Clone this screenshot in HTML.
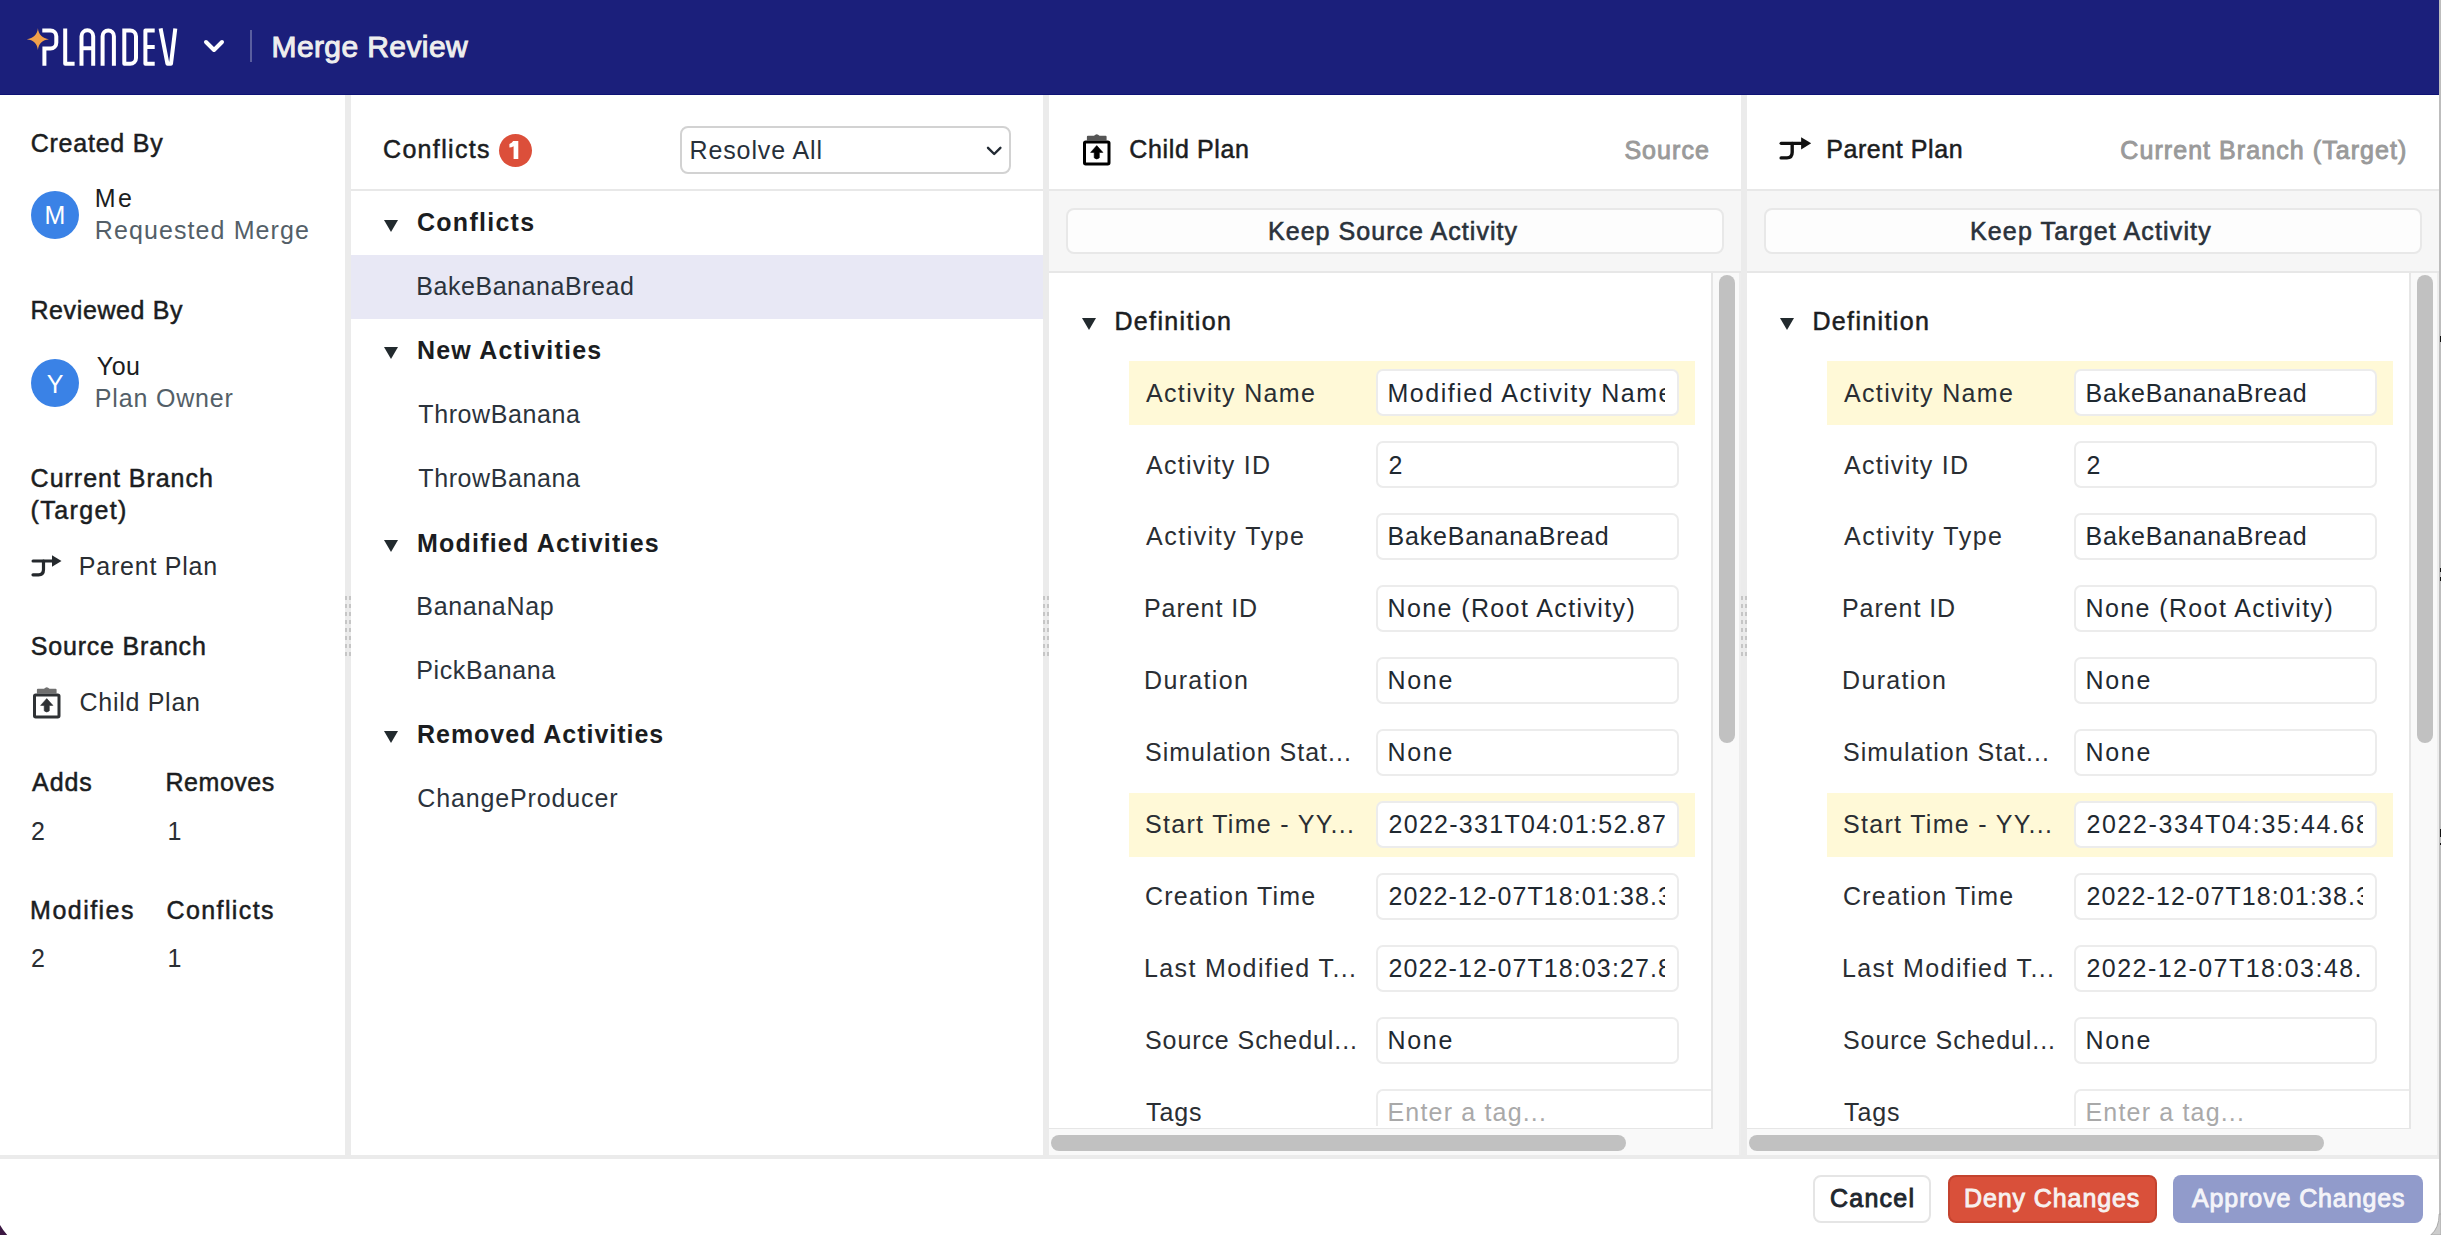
<!DOCTYPE html>
<html><head><meta charset="utf-8"><title>Merge Review</title>
<style>
html,body{margin:0;padding:0;width:2441px;height:1235px;overflow:hidden;background:#fff}
body{position:relative;font-family:"Liberation Sans",sans-serif}
.t{position:absolute;white-space:nowrap;line-height:40px;height:40px;font-family:"Liberation Sans",sans-serif}
</style></head><body>
<div style="position:absolute;left:0px;top:0px;width:2441px;height:95px;background:#1b1f7b;z-index:1"></div>
<div style="position:absolute;left:0px;top:94px;width:2441px;height:1px;background:#0e1275;z-index:2"></div>
<svg style="position:absolute;left:0;top:0;z-index:3" width="260" height="95" viewBox="0 0 260 95">
<g fill="none" stroke="#ffffff" stroke-width="4" stroke-linejoin="round">
<path d="M42.3 30.4 H50.5 A5.8 5.8 0 0 1 56.3 36.2 V42.7 A5.8 5.8 0 0 1 50.5 48.5 H44.4 M44.4 46.5 V65.7"/>
<path d="M65.2 28.4 V63.7 H74.6"/>
<path d="M81.5 65.7 V36.2 A5.85 5.85 0 0 1 93.2 36.2 V65.7 M81.5 48.2 H93.2"/>
<path d="M102.6 65.7 V36.2 A5.65 5.65 0 0 1 113.9 36.2 V65.7"/>
<path d="M124.3 28.4 V63.7 H130.2 A5.8 5.8 0 0 0 136 57.9 V36.2 A5.8 5.8 0 0 0 130.2 30.4 H124.3"/>
<path d="M154.7 30.4 H145.4 V63.7 H154.7 M145.4 47 H154.7"/>
<path d="M160.6 28.4 L167.4 63.7 H171 L175.3 28.4"/>
<path d="M206 42 L214 50 L222 42" stroke-linecap="round" stroke-width="4"/>
</g>
<path d="M37.9 28.3 C38.5 34.6 42.5 38.6 49 39.2 C42.5 39.800000000000004 38.5 43.800000000000004 37.9 50.1 C37.3 43.800000000000004 33.3 39.800000000000004 26.8 39.2 C33.3 38.6 37.3 34.6 37.9 28.3 Z" fill="#f0a04b"/>
<rect x="250" y="30" width="2" height="32" fill="#5a5e9f"/>
</svg>
<div class="t" style="left:271.50px;top:27.00px;font-size:30px;font-weight:400;color:#eeeeee;letter-spacing:0.403px;-webkit-text-stroke:1.0px #eeeeee;z-index:5">Merge Review</div>
<div style="position:absolute;left:0px;top:95px;width:2441px;height:1140px;background:#ffffff;z-index:0"></div>
<div style="position:absolute;left:345px;top:95px;width:6px;height:1060px;background:#ebebeb;z-index:2"></div>
<div style="position:absolute;left:1043px;top:95px;width:6px;height:1060px;background:#ebebeb;z-index:2"></div>
<div style="position:absolute;left:1741px;top:95px;width:6px;height:1060px;background:#ebebeb;z-index:2"></div>
<div style="position:absolute;left:0px;top:1155px;width:2441px;height:4px;background:#ebebeb;z-index:2"></div>
<div style="position:absolute;left:345px;top:596px;width:2.3px;height:4px;background:#c6c6c6;z-index:3"></div>
<div style="position:absolute;left:348.9px;top:596px;width:2.1px;height:4px;background:#c6c6c6;z-index:3"></div>
<div style="position:absolute;left:345px;top:604px;width:2.3px;height:4px;background:#c6c6c6;z-index:3"></div>
<div style="position:absolute;left:348.9px;top:604px;width:2.1px;height:4px;background:#c6c6c6;z-index:3"></div>
<div style="position:absolute;left:345px;top:612px;width:2.3px;height:4px;background:#c6c6c6;z-index:3"></div>
<div style="position:absolute;left:348.9px;top:612px;width:2.1px;height:4px;background:#c6c6c6;z-index:3"></div>
<div style="position:absolute;left:345px;top:620px;width:2.3px;height:4px;background:#c6c6c6;z-index:3"></div>
<div style="position:absolute;left:348.9px;top:620px;width:2.1px;height:4px;background:#c6c6c6;z-index:3"></div>
<div style="position:absolute;left:345px;top:628px;width:2.3px;height:4px;background:#c6c6c6;z-index:3"></div>
<div style="position:absolute;left:348.9px;top:628px;width:2.1px;height:4px;background:#c6c6c6;z-index:3"></div>
<div style="position:absolute;left:345px;top:636px;width:2.3px;height:4px;background:#c6c6c6;z-index:3"></div>
<div style="position:absolute;left:348.9px;top:636px;width:2.1px;height:4px;background:#c6c6c6;z-index:3"></div>
<div style="position:absolute;left:345px;top:644px;width:2.3px;height:4px;background:#c6c6c6;z-index:3"></div>
<div style="position:absolute;left:348.9px;top:644px;width:2.1px;height:4px;background:#c6c6c6;z-index:3"></div>
<div style="position:absolute;left:345px;top:652px;width:2.3px;height:4px;background:#c6c6c6;z-index:3"></div>
<div style="position:absolute;left:348.9px;top:652px;width:2.1px;height:4px;background:#c6c6c6;z-index:3"></div>
<div style="position:absolute;left:1043px;top:596px;width:2.3px;height:4px;background:#c6c6c6;z-index:3"></div>
<div style="position:absolute;left:1046.9px;top:596px;width:2.1px;height:4px;background:#c6c6c6;z-index:3"></div>
<div style="position:absolute;left:1043px;top:604px;width:2.3px;height:4px;background:#c6c6c6;z-index:3"></div>
<div style="position:absolute;left:1046.9px;top:604px;width:2.1px;height:4px;background:#c6c6c6;z-index:3"></div>
<div style="position:absolute;left:1043px;top:612px;width:2.3px;height:4px;background:#c6c6c6;z-index:3"></div>
<div style="position:absolute;left:1046.9px;top:612px;width:2.1px;height:4px;background:#c6c6c6;z-index:3"></div>
<div style="position:absolute;left:1043px;top:620px;width:2.3px;height:4px;background:#c6c6c6;z-index:3"></div>
<div style="position:absolute;left:1046.9px;top:620px;width:2.1px;height:4px;background:#c6c6c6;z-index:3"></div>
<div style="position:absolute;left:1043px;top:628px;width:2.3px;height:4px;background:#c6c6c6;z-index:3"></div>
<div style="position:absolute;left:1046.9px;top:628px;width:2.1px;height:4px;background:#c6c6c6;z-index:3"></div>
<div style="position:absolute;left:1043px;top:636px;width:2.3px;height:4px;background:#c6c6c6;z-index:3"></div>
<div style="position:absolute;left:1046.9px;top:636px;width:2.1px;height:4px;background:#c6c6c6;z-index:3"></div>
<div style="position:absolute;left:1043px;top:644px;width:2.3px;height:4px;background:#c6c6c6;z-index:3"></div>
<div style="position:absolute;left:1046.9px;top:644px;width:2.1px;height:4px;background:#c6c6c6;z-index:3"></div>
<div style="position:absolute;left:1043px;top:652px;width:2.3px;height:4px;background:#c6c6c6;z-index:3"></div>
<div style="position:absolute;left:1046.9px;top:652px;width:2.1px;height:4px;background:#c6c6c6;z-index:3"></div>
<div style="position:absolute;left:1741px;top:596px;width:2.3px;height:4px;background:#c6c6c6;z-index:3"></div>
<div style="position:absolute;left:1744.9px;top:596px;width:2.1px;height:4px;background:#c6c6c6;z-index:3"></div>
<div style="position:absolute;left:1741px;top:604px;width:2.3px;height:4px;background:#c6c6c6;z-index:3"></div>
<div style="position:absolute;left:1744.9px;top:604px;width:2.1px;height:4px;background:#c6c6c6;z-index:3"></div>
<div style="position:absolute;left:1741px;top:612px;width:2.3px;height:4px;background:#c6c6c6;z-index:3"></div>
<div style="position:absolute;left:1744.9px;top:612px;width:2.1px;height:4px;background:#c6c6c6;z-index:3"></div>
<div style="position:absolute;left:1741px;top:620px;width:2.3px;height:4px;background:#c6c6c6;z-index:3"></div>
<div style="position:absolute;left:1744.9px;top:620px;width:2.1px;height:4px;background:#c6c6c6;z-index:3"></div>
<div style="position:absolute;left:1741px;top:628px;width:2.3px;height:4px;background:#c6c6c6;z-index:3"></div>
<div style="position:absolute;left:1744.9px;top:628px;width:2.1px;height:4px;background:#c6c6c6;z-index:3"></div>
<div style="position:absolute;left:1741px;top:636px;width:2.3px;height:4px;background:#c6c6c6;z-index:3"></div>
<div style="position:absolute;left:1744.9px;top:636px;width:2.1px;height:4px;background:#c6c6c6;z-index:3"></div>
<div style="position:absolute;left:1741px;top:644px;width:2.3px;height:4px;background:#c6c6c6;z-index:3"></div>
<div style="position:absolute;left:1744.9px;top:644px;width:2.1px;height:4px;background:#c6c6c6;z-index:3"></div>
<div style="position:absolute;left:1741px;top:652px;width:2.3px;height:4px;background:#c6c6c6;z-index:3"></div>
<div style="position:absolute;left:1744.9px;top:652px;width:2.1px;height:4px;background:#c6c6c6;z-index:3"></div>
<div class="t" style="left:30.70px;top:122.60px;font-size:25px;font-weight:400;color:#1b1d21;letter-spacing:0.771px;-webkit-text-stroke:0.5px #1b1d21;z-index:5">Created By</div>
<div style="position:absolute;left:31px;top:191px;width:48px;height:48px;background:#3a82e6;border-radius:50%;z-index:3"></div>
<div class="t" style="left:31px;top:195px;width:48px;text-align:center;font-size:25px;color:#fff;z-index:5">M</div>
<div class="t" style="left:94.80px;top:178.40px;font-size:25px;font-weight:400;color:#1b1d21;letter-spacing:2.375px;z-index:5">Me</div>
<div class="t" style="left:94.80px;top:209.90px;font-size:25px;font-weight:400;color:#545f68;letter-spacing:1.098px;z-index:5">Requested Merge</div>
<div class="t" style="left:30.40px;top:290.40px;font-size:25px;font-weight:400;color:#1b1d21;letter-spacing:0.620px;-webkit-text-stroke:0.5px #1b1d21;z-index:5">Reviewed By</div>
<div style="position:absolute;left:31px;top:359px;width:48px;height:48px;background:#3a82e6;border-radius:50%;z-index:3"></div>
<div class="t" style="left:31px;top:364px;width:48px;text-align:center;font-size:25px;color:#fff;z-index:5">Y</div>
<div class="t" style="left:96.80px;top:346.20px;font-size:25px;font-weight:400;color:#1b1d21;letter-spacing:0.458px;z-index:5">You</div>
<div class="t" style="left:94.80px;top:378.10px;font-size:25px;font-weight:400;color:#545f68;letter-spacing:0.834px;z-index:5">Plan Owner</div>
<div class="t" style="left:30.60px;top:458.40px;font-size:25px;font-weight:400;color:#1b1d21;letter-spacing:0.983px;-webkit-text-stroke:0.5px #1b1d21;z-index:5">Current Branch</div>
<div class="t" style="left:30.60px;top:490.40px;font-size:25px;font-weight:400;color:#1b1d21;letter-spacing:1.370px;-webkit-text-stroke:0.5px #1b1d21;z-index:5">(Target)</div>
<svg style="position:absolute;left:31px;top:555px;z-index:4;transform-origin:0 0;transform:scale(1)" width="34" height="24" viewBox="0 0 34 24">
<path d="M2 6 H23" stroke="#25292d" stroke-width="3" fill="none" stroke-linecap="round"/>
<path d="M12.5 6 V14.5 Q12.5 19.8 7.5 19.8 H2" stroke="#25292d" stroke-width="3.2" fill="none" stroke-linecap="round"/>
<path d="M21 0.3 L30.5 6 L21 11.8 Z" fill="#25292d"/>
</svg>
<div class="t" style="left:78.80px;top:546.20px;font-size:25px;font-weight:400;color:#2a2e33;letter-spacing:0.776px;z-index:5">Parent Plan</div>
<div class="t" style="left:30.80px;top:626.40px;font-size:25px;font-weight:400;color:#1b1d21;letter-spacing:0.803px;-webkit-text-stroke:0.5px #1b1d21;z-index:5">Source Branch</div>
<svg style="position:absolute;left:33.3px;top:685px;z-index:4" width="30" height="36" viewBox="0 -2 30 36">
<path d="M3.9 6.6 V2.8 Q3.9 1.8 4.9 1.8 H11 Q13.75 -1.2 16.5 1.8 H22.6 Q23.6 1.8 23.6 2.8 V6.6 Z" fill="#707070"/>
<rect x="1.5" y="7.9" width="24.5" height="22" rx="1.2" fill="none" stroke="#2f3235" stroke-width="3"/>
<path d="M13.75 11.6 L19.9 18.4 H16.3 V23.8 Q13.75 26.2 11.2 23.8 V18.4 H7.6 Z" fill="#2f3235" stroke="#2f3235" stroke-width="0.6" stroke-linejoin="round"/>
</svg>
<div class="t" style="left:79.50px;top:682.00px;font-size:25px;font-weight:400;color:#2a2e33;letter-spacing:0.717px;z-index:5">Child Plan</div>
<div class="t" style="left:32.10px;top:762.40px;font-size:25px;font-weight:400;color:#1b1d21;letter-spacing:0.906px;-webkit-text-stroke:0.5px #1b1d21;z-index:5">Adds</div>
<div class="t" style="left:165.50px;top:762.40px;font-size:25px;font-weight:400;color:#1b1d21;letter-spacing:0.535px;-webkit-text-stroke:0.5px #1b1d21;z-index:5">Removes</div>
<div class="t" style="left:31.10px;top:810.60px;font-size:25px;font-weight:400;color:#2a2e33;letter-spacing:0.000px;z-index:5">2</div>
<div class="t" style="left:167.50px;top:810.60px;font-size:25px;font-weight:400;color:#2a2e33;letter-spacing:0.000px;z-index:5">1</div>
<div class="t" style="left:30.10px;top:889.80px;font-size:25px;font-weight:400;color:#1b1d21;letter-spacing:1.473px;-webkit-text-stroke:0.5px #1b1d21;z-index:5">Modifies</div>
<div class="t" style="left:166.50px;top:889.80px;font-size:25px;font-weight:400;color:#1b1d21;letter-spacing:1.392px;-webkit-text-stroke:0.5px #1b1d21;z-index:5">Conflicts</div>
<div class="t" style="left:31.10px;top:937.90px;font-size:25px;font-weight:400;color:#2a2e33;letter-spacing:0.000px;z-index:5">2</div>
<div class="t" style="left:167.50px;top:937.90px;font-size:25px;font-weight:400;color:#2a2e33;letter-spacing:0.000px;z-index:5">1</div>
<div class="t" style="left:383.00px;top:129.40px;font-size:25px;font-weight:400;color:#1b1d21;letter-spacing:1.330px;-webkit-text-stroke:0.5px #1b1d21;z-index:5">Conflicts</div>
<div style="position:absolute;left:498.5px;top:134px;width:33px;height:33px;background:#dc4f3a;border-radius:50%;z-index:3"></div>
<svg style="position:absolute;left:0;top:0;z-index:5" width="600" height="200"><path d="M513.2 141 H518.3 V159 H513.6 V146.2 Q511.5 147.4 509.4 147.6 V143.9 Q512 143.2 513.2 141 Z" fill="#ffffff"/></svg>
<div style="position:absolute;left:680px;top:126px;width:331px;height:48px;border:2px solid #d2d2d2;border-radius:8px;box-sizing:border-box;background:#fff;z-index:3"></div>
<div class="t" style="left:689.50px;top:129.80px;font-size:25px;font-weight:400;color:#27303a;letter-spacing:0.881px;z-index:5">Resolve All</div>
<svg style="position:absolute;left:984px;top:144px;z-index:4" width="20" height="14" viewBox="0 0 20 14"><path d="M4 3.8 L10.2 10 L16.4 3.8" stroke="#222a33" stroke-width="2.4" fill="none" stroke-linecap="round" stroke-linejoin="round"/></svg>
<div style="position:absolute;left:351px;top:189px;width:692px;height:2px;background:#e8e8e8;z-index:2"></div>
<div style="position:absolute;left:351px;top:255px;width:692px;height:64px;background:#e8e8f5;z-index:2"></div>
<svg style="position:absolute;left:384px;top:219.8px;z-index:4" width="14" height="12" viewBox="0 0 14 12"><path d="M0 0 H14 L7 12 Z" fill="#222a2e"/></svg>
<div class="t" style="left:417.00px;top:202.40px;font-size:25px;font-weight:700;color:#1b1d21;letter-spacing:1.270px;z-index:5">Conflicts</div>
<div class="t" style="left:416.30px;top:266.40px;font-size:25px;font-weight:400;color:#2b333c;letter-spacing:0.544px;z-index:5">BakeBananaBread</div>
<svg style="position:absolute;left:384px;top:347.4px;z-index:4" width="14" height="12" viewBox="0 0 14 12"><path d="M0 0 H14 L7 12 Z" fill="#222a2e"/></svg>
<div class="t" style="left:417.00px;top:330.00px;font-size:25px;font-weight:700;color:#1b1d21;letter-spacing:1.200px;z-index:5">New Activities</div>
<div class="t" style="left:418.30px;top:394.40px;font-size:25px;font-weight:400;color:#2b333c;letter-spacing:0.585px;z-index:5">ThrowBanana</div>
<div class="t" style="left:418.30px;top:458.00px;font-size:25px;font-weight:400;color:#2b333c;letter-spacing:0.585px;z-index:5">ThrowBanana</div>
<svg style="position:absolute;left:384px;top:539.9px;z-index:4" width="14" height="12" viewBox="0 0 14 12"><path d="M0 0 H14 L7 12 Z" fill="#222a2e"/></svg>
<div class="t" style="left:417.00px;top:522.50px;font-size:25px;font-weight:700;color:#1b1d21;letter-spacing:1.208px;z-index:5">Modified Activities</div>
<div class="t" style="left:416.30px;top:585.80px;font-size:25px;font-weight:400;color:#2b333c;letter-spacing:0.656px;z-index:5">BananaNap</div>
<div class="t" style="left:416.30px;top:649.80px;font-size:25px;font-weight:400;color:#2b333c;letter-spacing:0.598px;z-index:5">PickBanana</div>
<svg style="position:absolute;left:384px;top:731.2px;z-index:4" width="14" height="12" viewBox="0 0 14 12"><path d="M0 0 H14 L7 12 Z" fill="#222a2e"/></svg>
<div class="t" style="left:417.00px;top:713.80px;font-size:25px;font-weight:700;color:#1b1d21;letter-spacing:0.968px;z-index:5">Removed Activities</div>
<div class="t" style="left:417.30px;top:777.80px;font-size:25px;font-weight:400;color:#2b333c;letter-spacing:0.862px;z-index:5">ChangeProducer</div>
<svg style="position:absolute;left:1083px;top:132px;z-index:4" width="30" height="36" viewBox="0 -2 30 36">
<path d="M3.9 6.6 V2.8 Q3.9 1.8 4.9 1.8 H11 Q13.75 -1.2 16.5 1.8 H22.6 Q23.6 1.8 23.6 2.8 V6.6 Z" fill="#555555"/>
<rect x="1.5" y="7.9" width="24.5" height="22" rx="1.2" fill="none" stroke="#000000" stroke-width="3"/>
<path d="M13.75 11.6 L19.9 18.4 H16.3 V23.8 Q13.75 26.2 11.2 23.8 V18.4 H7.6 Z" fill="#000000" stroke="#000000" stroke-width="0.6" stroke-linejoin="round"/>
</svg>
<div class="t" style="left:1129.30px;top:129.30px;font-size:25px;font-weight:400;color:#1b1d21;letter-spacing:0.628px;-webkit-text-stroke:0.5px #1b1d21;z-index:5">Child Plan</div>
<div class="t" style="left:1624.40px;top:129.60px;font-size:25px;font-weight:400;color:#9a9a9a;letter-spacing:1.058px;-webkit-text-stroke:0.9px #9a9a9a;z-index:5">Source</div>
<div style="position:absolute;left:1049px;top:189px;width:692px;height:2px;background:#e8e8e8;z-index:2"></div>
<div style="position:absolute;left:1049px;top:191px;width:692px;height:81px;background:#f6f6f6;z-index:2"></div>
<div style="position:absolute;left:1049px;top:271px;width:692px;height:2px;background:#e7e7e7;z-index:2"></div>
<div style="position:absolute;left:1066px;top:208px;width:658px;height:46px;background:#fdfdfd;border:2px solid #e8e8e8;border-radius:8px;box-sizing:border-box;z-index:3"></div>
<div class="t" style="left:1268.00px;top:210.80px;font-size:25px;font-weight:400;color:#2a323b;letter-spacing:1.039px;-webkit-text-stroke:0.6px #2a323b;z-index:5">Keep Source Activity</div>
<div style="position:absolute;left:1711px;top:273px;width:30px;height:882px;background:#f9f9f9;z-index:2"></div>
<div style="position:absolute;left:1711px;top:273px;width:1.5px;height:856px;background:#e6e6e6;z-index:3"></div>
<div style="position:absolute;left:1739px;top:273px;width:2px;height:882px;background:#ededed;z-index:3"></div>
<div style="position:absolute;left:1719px;top:275px;width:16px;height:468px;background:#c1c1c1;border-radius:8px;z-index:3"></div>
<div style="position:absolute;left:1049px;top:1129px;width:692px;height:26px;background:#f9f9f9;z-index:2"></div>
<div style="position:absolute;left:1049px;top:1127.5px;width:663px;height:1.5px;background:#e6e6e6;z-index:3"></div>
<div style="position:absolute;left:1051px;top:1135px;width:575px;height:16px;background:#c1c1c1;border-radius:8px;z-index:3"></div>
<svg style="position:absolute;left:1082px;top:318px;z-index:4" width="14" height="12" viewBox="0 0 14 12"><path d="M0 0 H14 L7 12 Z" fill="#222a2e"/></svg>
<div class="t" style="left:1114.40px;top:300.70px;font-size:25px;font-weight:400;color:#1b1d21;letter-spacing:1.364px;-webkit-text-stroke:0.5px #1b1d21;z-index:5">Definition</div>
<div style="position:absolute;left:1129px;top:361.2px;width:566px;height:64px;background:#fff9d7;z-index:2"></div>
<div class="t" style="left:1146.00px;top:372.60px;font-size:25px;font-weight:400;color:#2a2e33;letter-spacing:1.341px;z-index:5">Activity Name</div>
<div style="position:absolute;left:1375.5px;top:369.2px;width:303px;height:47px;background:#fff;border:2px solid #ececec;border-radius:7px;box-sizing:border-box;z-index:3"></div>
<div style="position:absolute;left:1385.5px;top:372.60px;width:279.5px;height:40px;overflow:hidden;z-index:4"><div class="t" style="left:2.00px;top:0px;font-size:25px;font-weight:400;color:#1f2931;letter-spacing:1.531px;z-index:4">Modified Activity Name</div></div>
<div class="t" style="left:1146.00px;top:444.80px;font-size:25px;font-weight:400;color:#2a2e33;letter-spacing:1.293px;z-index:5">Activity ID</div>
<div style="position:absolute;left:1375.5px;top:441.4px;width:303px;height:47px;background:#fff;border:2px solid #ececec;border-radius:7px;box-sizing:border-box;z-index:3"></div>
<div style="position:absolute;left:1385.5px;top:444.80px;width:279.5px;height:40px;overflow:hidden;z-index:4"><div class="t" style="left:3.00px;top:0px;font-size:25px;font-weight:400;color:#1f2931;letter-spacing:0.000px;z-index:4">2</div></div>
<div class="t" style="left:1146.00px;top:516.40px;font-size:25px;font-weight:400;color:#2a2e33;letter-spacing:1.507px;z-index:5">Activity Type</div>
<div style="position:absolute;left:1375.5px;top:513px;width:303px;height:47px;background:#fff;border:2px solid #ececec;border-radius:7px;box-sizing:border-box;z-index:3"></div>
<div style="position:absolute;left:1385.5px;top:516.40px;width:279.5px;height:40px;overflow:hidden;z-index:4"><div class="t" style="left:2.00px;top:0px;font-size:25px;font-weight:400;color:#1f2931;letter-spacing:0.801px;z-index:4">BakeBananaBread</div></div>
<div class="t" style="left:1144.00px;top:588.00px;font-size:25px;font-weight:400;color:#2a2e33;letter-spacing:0.944px;z-index:5">Parent ID</div>
<div style="position:absolute;left:1375.5px;top:584.6px;width:303px;height:47px;background:#fff;border:2px solid #ececec;border-radius:7px;box-sizing:border-box;z-index:3"></div>
<div style="position:absolute;left:1385.5px;top:588.00px;width:279.5px;height:40px;overflow:hidden;z-index:4"><div class="t" style="left:2.00px;top:0px;font-size:25px;font-weight:400;color:#1f2931;letter-spacing:1.391px;z-index:4">None (Root Activity)</div></div>
<div class="t" style="left:1144.00px;top:660.40px;font-size:25px;font-weight:400;color:#2a2e33;letter-spacing:1.344px;z-index:5">Duration</div>
<div style="position:absolute;left:1375.5px;top:657px;width:303px;height:47px;background:#fff;border:2px solid #ececec;border-radius:7px;box-sizing:border-box;z-index:3"></div>
<div style="position:absolute;left:1385.5px;top:660.40px;width:279.5px;height:40px;overflow:hidden;z-index:4"><div class="t" style="left:2.00px;top:0px;font-size:25px;font-weight:400;color:#1f2931;letter-spacing:1.679px;z-index:4">None</div></div>
<div class="t" style="left:1145.00px;top:732.00px;font-size:25px;font-weight:400;color:#2a2e33;letter-spacing:0.992px;z-index:5">Simulation Stat...</div>
<div style="position:absolute;left:1375.5px;top:728.6px;width:303px;height:47px;background:#fff;border:2px solid #ececec;border-radius:7px;box-sizing:border-box;z-index:3"></div>
<div style="position:absolute;left:1385.5px;top:732.00px;width:279.5px;height:40px;overflow:hidden;z-index:4"><div class="t" style="left:2.00px;top:0px;font-size:25px;font-weight:400;color:#1f2931;letter-spacing:1.679px;z-index:4">None</div></div>
<div style="position:absolute;left:1129px;top:792.6px;width:566px;height:64px;background:#fff9d7;z-index:2"></div>
<div class="t" style="left:1145.00px;top:804.00px;font-size:25px;font-weight:400;color:#2a2e33;letter-spacing:1.317px;z-index:5">Start Time - YY...</div>
<div style="position:absolute;left:1375.5px;top:800.6px;width:303px;height:47px;background:#fff;border:2px solid #ececec;border-radius:7px;box-sizing:border-box;z-index:3"></div>
<div style="position:absolute;left:1385.5px;top:804.00px;width:279.5px;height:40px;overflow:hidden;z-index:4"><div class="t" style="left:3.00px;top:0px;font-size:25px;font-weight:400;color:#1f2931;letter-spacing:1.285px;z-index:4">2022-331T04:01:52.87</div></div>
<div class="t" style="left:1145.00px;top:876.00px;font-size:25px;font-weight:400;color:#2a2e33;letter-spacing:1.220px;z-index:5">Creation Time</div>
<div style="position:absolute;left:1375.5px;top:872.6px;width:303px;height:47px;background:#fff;border:2px solid #ececec;border-radius:7px;box-sizing:border-box;z-index:3"></div>
<div style="position:absolute;left:1385.5px;top:876.00px;width:279.5px;height:40px;overflow:hidden;z-index:4"><div class="t" style="left:3.00px;top:0px;font-size:25px;font-weight:400;color:#1f2931;letter-spacing:1.104px;z-index:4">2022-12-07T18:01:38.3</div></div>
<div class="t" style="left:1144.00px;top:948.00px;font-size:25px;font-weight:400;color:#2a2e33;letter-spacing:1.381px;z-index:5">Last Modified T...</div>
<div style="position:absolute;left:1375.5px;top:944.6px;width:303px;height:47px;background:#fff;border:2px solid #ececec;border-radius:7px;box-sizing:border-box;z-index:3"></div>
<div style="position:absolute;left:1385.5px;top:948.00px;width:279.5px;height:40px;overflow:hidden;z-index:4"><div class="t" style="left:3.00px;top:0px;font-size:25px;font-weight:400;color:#1f2931;letter-spacing:1.104px;z-index:4">2022-12-07T18:03:27.8</div></div>
<div class="t" style="left:1145.00px;top:1020.00px;font-size:25px;font-weight:400;color:#2a2e33;letter-spacing:0.913px;z-index:5">Source Schedul...</div>
<div style="position:absolute;left:1375.5px;top:1016.5999999999999px;width:303px;height:47px;background:#fff;border:2px solid #ececec;border-radius:7px;box-sizing:border-box;z-index:3"></div>
<div style="position:absolute;left:1385.5px;top:1020.00px;width:279.5px;height:40px;overflow:hidden;z-index:4"><div class="t" style="left:2.00px;top:0px;font-size:25px;font-weight:400;color:#1f2931;letter-spacing:1.679px;z-index:4">None</div></div>
<div class="t" style="left:1146.00px;top:1092.40px;font-size:25px;font-weight:400;color:#2a2e33;letter-spacing:0.897px;z-index:5">Tags</div>
<div style="position:absolute;left:1375.5px;top:1089px;width:335.5px;height:37px;background:#fff;border:2px solid #ececec;border-right:none;border-bottom:none;border-radius:7px 0 0 0;box-sizing:border-box;z-index:3"></div>
<div style="position:absolute;left:1385.5px;top:1092.40px;width:279.5px;height:40px;overflow:hidden;z-index:4"><div class="t" style="left:2.00px;top:0px;font-size:25px;font-weight:400;color:#a9a9a9;letter-spacing:1.177px;z-index:4">Enter a tag...</div></div>
<div style="position:absolute;left:1049px;top:1129px;width:662px;height:26px;background:#f9f9f9;z-index:3"></div>
<div style="position:absolute;left:1051px;top:1135px;width:575px;height:16px;background:#c1c1c1;border-radius:8px;z-index:4"></div>
<svg style="position:absolute;left:1778.5px;top:137.2px;z-index:4;transform-origin:0 0;transform:scale(1.055)" width="34" height="24" viewBox="0 0 34 24">
<path d="M2 6 H23" stroke="#111111" stroke-width="3" fill="none" stroke-linecap="round"/>
<path d="M12.5 6 V14.5 Q12.5 19.8 7.5 19.8 H2" stroke="#111111" stroke-width="3.2" fill="none" stroke-linecap="round"/>
<path d="M21 0.3 L30.5 6 L21 11.8 Z" fill="#111111"/>
</svg>
<div class="t" style="left:1826.20px;top:129.30px;font-size:25px;font-weight:400;color:#1b1d21;letter-spacing:0.576px;-webkit-text-stroke:0.5px #1b1d21;z-index:5">Parent Plan</div>
<div class="t" style="left:2120.30px;top:129.60px;font-size:25px;font-weight:400;color:#9a9a9a;letter-spacing:1.065px;-webkit-text-stroke:0.9px #9a9a9a;z-index:5">Current Branch (Target)</div>
<div style="position:absolute;left:1747px;top:189px;width:692px;height:2px;background:#e8e8e8;z-index:2"></div>
<div style="position:absolute;left:1747px;top:191px;width:692px;height:81px;background:#f6f6f6;z-index:2"></div>
<div style="position:absolute;left:1747px;top:271px;width:692px;height:2px;background:#e7e7e7;z-index:2"></div>
<div style="position:absolute;left:1764px;top:208px;width:658px;height:46px;background:#fdfdfd;border:2px solid #e8e8e8;border-radius:8px;box-sizing:border-box;z-index:3"></div>
<div class="t" style="left:1970.00px;top:210.80px;font-size:25px;font-weight:400;color:#2a323b;letter-spacing:1.135px;-webkit-text-stroke:0.6px #2a323b;z-index:5">Keep Target Activity</div>
<div style="position:absolute;left:2409px;top:273px;width:30px;height:882px;background:#f9f9f9;z-index:2"></div>
<div style="position:absolute;left:2409px;top:273px;width:1.5px;height:856px;background:#e6e6e6;z-index:3"></div>
<div style="position:absolute;left:2437px;top:273px;width:2px;height:882px;background:#ededed;z-index:3"></div>
<div style="position:absolute;left:2417px;top:275px;width:16px;height:468px;background:#c1c1c1;border-radius:8px;z-index:3"></div>
<div style="position:absolute;left:1747px;top:1129px;width:692px;height:26px;background:#f9f9f9;z-index:2"></div>
<div style="position:absolute;left:1747px;top:1127.5px;width:663px;height:1.5px;background:#e6e6e6;z-index:3"></div>
<div style="position:absolute;left:1749px;top:1135px;width:575px;height:16px;background:#c1c1c1;border-radius:8px;z-index:3"></div>
<svg style="position:absolute;left:1780px;top:318px;z-index:4" width="14" height="12" viewBox="0 0 14 12"><path d="M0 0 H14 L7 12 Z" fill="#222a2e"/></svg>
<div class="t" style="left:1812.40px;top:300.70px;font-size:25px;font-weight:400;color:#1b1d21;letter-spacing:1.364px;-webkit-text-stroke:0.5px #1b1d21;z-index:5">Definition</div>
<div style="position:absolute;left:1827px;top:361.2px;width:566px;height:64px;background:#fff9d7;z-index:2"></div>
<div class="t" style="left:1844.00px;top:372.60px;font-size:25px;font-weight:400;color:#2a2e33;letter-spacing:1.341px;z-index:5">Activity Name</div>
<div style="position:absolute;left:2073.5px;top:369.2px;width:303px;height:47px;background:#fff;border:2px solid #ececec;border-radius:7px;box-sizing:border-box;z-index:3"></div>
<div style="position:absolute;left:2083.5px;top:372.60px;width:279.5px;height:40px;overflow:hidden;z-index:4"><div class="t" style="left:2.00px;top:0px;font-size:25px;font-weight:400;color:#1f2931;letter-spacing:0.801px;z-index:4">BakeBananaBread</div></div>
<div class="t" style="left:1844.00px;top:444.80px;font-size:25px;font-weight:400;color:#2a2e33;letter-spacing:1.293px;z-index:5">Activity ID</div>
<div style="position:absolute;left:2073.5px;top:441.4px;width:303px;height:47px;background:#fff;border:2px solid #ececec;border-radius:7px;box-sizing:border-box;z-index:3"></div>
<div style="position:absolute;left:2083.5px;top:444.80px;width:279.5px;height:40px;overflow:hidden;z-index:4"><div class="t" style="left:3.00px;top:0px;font-size:25px;font-weight:400;color:#1f2931;letter-spacing:0.000px;z-index:4">2</div></div>
<div class="t" style="left:1844.00px;top:516.40px;font-size:25px;font-weight:400;color:#2a2e33;letter-spacing:1.507px;z-index:5">Activity Type</div>
<div style="position:absolute;left:2073.5px;top:513px;width:303px;height:47px;background:#fff;border:2px solid #ececec;border-radius:7px;box-sizing:border-box;z-index:3"></div>
<div style="position:absolute;left:2083.5px;top:516.40px;width:279.5px;height:40px;overflow:hidden;z-index:4"><div class="t" style="left:2.00px;top:0px;font-size:25px;font-weight:400;color:#1f2931;letter-spacing:0.801px;z-index:4">BakeBananaBread</div></div>
<div class="t" style="left:1842.00px;top:588.00px;font-size:25px;font-weight:400;color:#2a2e33;letter-spacing:0.944px;z-index:5">Parent ID</div>
<div style="position:absolute;left:2073.5px;top:584.6px;width:303px;height:47px;background:#fff;border:2px solid #ececec;border-radius:7px;box-sizing:border-box;z-index:3"></div>
<div style="position:absolute;left:2083.5px;top:588.00px;width:279.5px;height:40px;overflow:hidden;z-index:4"><div class="t" style="left:2.00px;top:0px;font-size:25px;font-weight:400;color:#1f2931;letter-spacing:1.391px;z-index:4">None (Root Activity)</div></div>
<div class="t" style="left:1842.00px;top:660.40px;font-size:25px;font-weight:400;color:#2a2e33;letter-spacing:1.344px;z-index:5">Duration</div>
<div style="position:absolute;left:2073.5px;top:657px;width:303px;height:47px;background:#fff;border:2px solid #ececec;border-radius:7px;box-sizing:border-box;z-index:3"></div>
<div style="position:absolute;left:2083.5px;top:660.40px;width:279.5px;height:40px;overflow:hidden;z-index:4"><div class="t" style="left:2.00px;top:0px;font-size:25px;font-weight:400;color:#1f2931;letter-spacing:1.679px;z-index:4">None</div></div>
<div class="t" style="left:1843.00px;top:732.00px;font-size:25px;font-weight:400;color:#2a2e33;letter-spacing:0.992px;z-index:5">Simulation Stat...</div>
<div style="position:absolute;left:2073.5px;top:728.6px;width:303px;height:47px;background:#fff;border:2px solid #ececec;border-radius:7px;box-sizing:border-box;z-index:3"></div>
<div style="position:absolute;left:2083.5px;top:732.00px;width:279.5px;height:40px;overflow:hidden;z-index:4"><div class="t" style="left:2.00px;top:0px;font-size:25px;font-weight:400;color:#1f2931;letter-spacing:1.679px;z-index:4">None</div></div>
<div style="position:absolute;left:1827px;top:792.6px;width:566px;height:64px;background:#fff9d7;z-index:2"></div>
<div class="t" style="left:1843.00px;top:804.00px;font-size:25px;font-weight:400;color:#2a2e33;letter-spacing:1.317px;z-index:5">Start Time - YY...</div>
<div style="position:absolute;left:2073.5px;top:800.6px;width:303px;height:47px;background:#fff;border:2px solid #ececec;border-radius:7px;box-sizing:border-box;z-index:3"></div>
<div style="position:absolute;left:2083.5px;top:804.00px;width:279.5px;height:40px;overflow:hidden;z-index:4"><div class="t" style="left:3.00px;top:0px;font-size:25px;font-weight:400;color:#1f2931;letter-spacing:1.601px;z-index:4">2022-334T04:35:44.68</div></div>
<div class="t" style="left:1843.00px;top:876.00px;font-size:25px;font-weight:400;color:#2a2e33;letter-spacing:1.220px;z-index:5">Creation Time</div>
<div style="position:absolute;left:2073.5px;top:872.6px;width:303px;height:47px;background:#fff;border:2px solid #ececec;border-radius:7px;box-sizing:border-box;z-index:3"></div>
<div style="position:absolute;left:2083.5px;top:876.00px;width:279.5px;height:40px;overflow:hidden;z-index:4"><div class="t" style="left:3.00px;top:0px;font-size:25px;font-weight:400;color:#1f2931;letter-spacing:1.104px;z-index:4">2022-12-07T18:01:38.3</div></div>
<div class="t" style="left:1842.00px;top:948.00px;font-size:25px;font-weight:400;color:#2a2e33;letter-spacing:1.381px;z-index:5">Last Modified T...</div>
<div style="position:absolute;left:2073.5px;top:944.6px;width:303px;height:47px;background:#fff;border:2px solid #ececec;border-radius:7px;box-sizing:border-box;z-index:3"></div>
<div style="position:absolute;left:2083.5px;top:948.00px;width:279.5px;height:40px;overflow:hidden;z-index:4"><div class="t" style="left:3.00px;top:0px;font-size:25px;font-weight:400;color:#1f2931;letter-spacing:1.454px;z-index:4">2022-12-07T18:03:48.</div></div>
<div class="t" style="left:1843.00px;top:1020.00px;font-size:25px;font-weight:400;color:#2a2e33;letter-spacing:0.913px;z-index:5">Source Schedul...</div>
<div style="position:absolute;left:2073.5px;top:1016.5999999999999px;width:303px;height:47px;background:#fff;border:2px solid #ececec;border-radius:7px;box-sizing:border-box;z-index:3"></div>
<div style="position:absolute;left:2083.5px;top:1020.00px;width:279.5px;height:40px;overflow:hidden;z-index:4"><div class="t" style="left:2.00px;top:0px;font-size:25px;font-weight:400;color:#1f2931;letter-spacing:1.679px;z-index:4">None</div></div>
<div class="t" style="left:1844.00px;top:1092.40px;font-size:25px;font-weight:400;color:#2a2e33;letter-spacing:0.897px;z-index:5">Tags</div>
<div style="position:absolute;left:2073.5px;top:1089px;width:335.5px;height:37px;background:#fff;border:2px solid #ececec;border-right:none;border-bottom:none;border-radius:7px 0 0 0;box-sizing:border-box;z-index:3"></div>
<div style="position:absolute;left:2083.5px;top:1092.40px;width:279.5px;height:40px;overflow:hidden;z-index:4"><div class="t" style="left:2.00px;top:0px;font-size:25px;font-weight:400;color:#a9a9a9;letter-spacing:1.177px;z-index:4">Enter a tag...</div></div>
<div style="position:absolute;left:1747px;top:1129px;width:662px;height:26px;background:#f9f9f9;z-index:3"></div>
<div style="position:absolute;left:1749px;top:1135px;width:575px;height:16px;background:#c1c1c1;border-radius:8px;z-index:4"></div>
<div style="position:absolute;left:2439px;top:0px;width:2px;height:1235px;background:#bdbdbd;z-index:6"></div>
<div style="position:absolute;left:2439.5px;top:336px;width:1.5px;height:6px;background:#111;z-index:7"></div>
<div style="position:absolute;left:2439.5px;top:568px;width:1.5px;height:3.5px;background:#111;z-index:7"></div>
<div style="position:absolute;left:2439.5px;top:577px;width:1.5px;height:4px;background:#111;z-index:7"></div>
<div style="position:absolute;left:2439.5px;top:829px;width:1.5px;height:7.5px;background:#111;z-index:7"></div>
<div style="position:absolute;left:2439.5px;top:843px;width:1.5px;height:2px;background:#111;z-index:7"></div>
<div style="position:absolute;left:1812.5px;top:1175px;width:118px;height:47.5px;background:#fff;border:2px solid #e5e5e5;border-radius:8px;box-sizing:border-box;z-index:3"></div>
<div class="t" style="left:1830.00px;top:1178.20px;font-size:25px;font-weight:400;color:#1f272e;letter-spacing:1.227px;-webkit-text-stroke:0.9px #1f272e;z-index:5">Cancel</div>
<div style="position:absolute;left:1947.5px;top:1175px;width:209px;height:47.5px;background:#d9503a;border:2px solid #c4432f;border-radius:8px;box-sizing:border-box;z-index:3"></div>
<div class="t" style="left:1964.00px;top:1178.20px;font-size:25px;font-weight:400;color:#f7f1ef;letter-spacing:0.902px;-webkit-text-stroke:0.9px #f7f1ef;z-index:5">Deny Changes</div>
<div style="position:absolute;left:2173px;top:1175px;width:250px;height:47.5px;background:#919bcb;border-radius:8px;z-index:3"></div>
<div class="t" style="left:2192.00px;top:1178.20px;font-size:25px;font-weight:400;color:#f4f4f9;letter-spacing:0.883px;-webkit-text-stroke:0.9px #f4f4f9;z-index:5">Approve Changes</div>
<svg style="position:absolute;left:0;top:1215px;z-index:7" width="20" height="20" viewBox="0 1215 20 20"><path d="M0 1225 Q2.5 1229.5 7.2 1235 H0 Z" fill="#3b1742"/></svg>
<svg style="position:absolute;left:2421px;top:1205px;z-index:7" width="20" height="30" viewBox="2421 1205 20 30"><path d="M2439.2 1214 Q2439.2 1228 2430.8 1235 H2441 V1214 Z" fill="#cdcdcd" stroke="#a9a9a9" stroke-width="1"/></svg>
</body></html>
